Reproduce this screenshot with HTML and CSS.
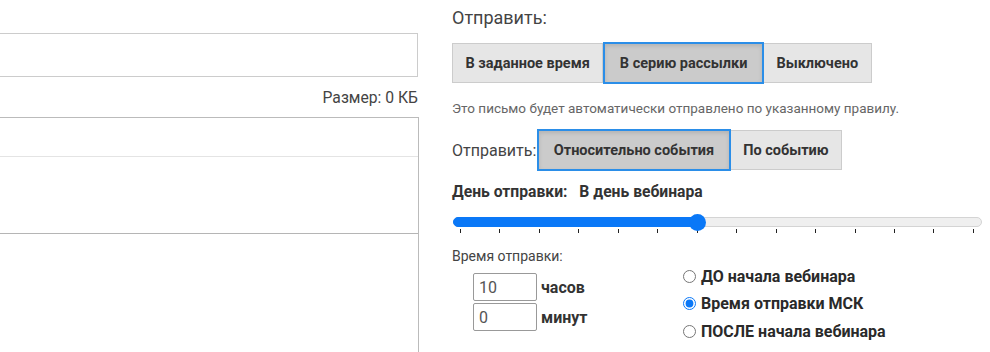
FILE: index.html
```html
<!DOCTYPE html>
<html lang="ru">
<head>
<meta charset="UTF-8" />
<meta name="viewport" content="width=device-width, initial-scale=1" />
<title>Настройки отправки письма</title>
<link rel="stylesheet" href="styles.css">
</head>
<body>

<div class="page">
  <div class="left">
    <div class="subject"></div>
    <div class="size">Размер: 0 КБ</div>
    <div class="editor">
      <div class="editor-toolbar"></div>
      <div class="editor-tabs"></div>
      <div class="editor-body"></div>
    </div>
  </div>

  <div class="right">
    <div class="heading">Отправить:</div>
    <div class="btn-group">
      <button class="btn">В заданное время</button>
      <button class="btn active">В серию рассылки</button>
      <button class="btn">Выключено</button>
    </div>

    <p class="hint">Это письмо будет автоматически отправлено по указанному правилу.</p>

    <div class="send-row">
      <span class="send-label">Отправить:</span>
      <div class="btn-group">
        <button class="btn active">Относительно события</button>
        <button class="btn">По событию</button>
      </div>
    </div>

    <div class="day">День отправки: <span class="day-value">В день вебинара</span></div>

    <div class="slider">
      <div class="track">
        <div class="fill" style="width: 46.2%"></div>
        <div class="thumb" style="left: 46.2%"></div>
      </div>
      <div class="ticks">
        <i></i><i></i><i></i><i></i><i></i><i></i><i></i>
        <i></i><i></i><i></i><i></i><i></i><i></i><i></i>
      </div>
    </div>

    <div class="time-label">Время отправки:</div>
    <div class="time-row">
      <div class="fields">
        <label class="field"><input type="text" value="10"> часов</label>
        <label class="field"><input type="text" value="0"> минут</label>
      </div>
      <div class="radios">
        <label class="radio"><input type="radio" name="when"> ДО начала вебинара</label>
        <label class="radio"><input type="radio" name="when" checked> Время отправки МСК</label>
        <label class="radio"><input type="radio" name="when"> ПОСЛЕ начала вебинара</label>
      </div>
    </div>
  </div>
</div>

</body>
</html>
```

FILE: styles.css
```css
body {
  margin: 0;
  font-family: Roboto, 'Liberation Sans', Arial, sans-serif;
  color: #333;
  background: #fff;
  overflow: hidden;
}

.page {
  display: flex;
  gap: 33px;
}

/* Left column: subject + editor, cut off by the window */
.left {
  width: 421px;
  margin-left: -2px;
  flex-shrink: 0;
}

.subject {
  margin-top: 33px;
  width: 418px;
  height: 42px;
  border: 1px solid #ccc;
}

.size {
  width: 420px;
  text-align: right;
  font-size: 15.7px;
  color: #444;
  margin-top: 11px;
  line-height: 20px;
}

.editor {
  margin-top: 9px;
  border: 1px solid #bbb;
  height: 260px;
}

.editor-toolbar {
  height: 38px;
  border-bottom: 1px solid #e4e4e4;
}

.editor-tabs {
  height: 76px;
  border-bottom: 1px solid #b5b5b5;
}

/* Right column: send settings */
.right {
  flex: 1;
}

.heading {
  font-size: 18px;
  color: #444;
  margin-top: 8px;
  line-height: 20px;
}

.btn-group {
  display: flex;
  align-items: center;
}

.right > .btn-group {
  margin-top: 14px;
}

.btn {
  font-family: inherit;
  font-size: 14.5px;
  font-weight: 700;
  color: #333;
  background: #e6e6e6;
  border: 1px solid #ccc;
  height: 40px;
  padding: 0 12.5px;
  margin: 0;
  cursor: pointer;
}

.btn + .btn {
  border-left: none;
}

.btn.active {
  background: #cbcbcb;
  border: 2px solid #2b8ee8;
  height: 42px;
  padding: 0 14.5px;
  box-shadow: inset 0 2px 4px rgba(0, 0, 0, 0.12);
}

.btn.active + .btn {
  border-left: none;
}

.hint {
  font-size: 13.5px;
  color: #666;
  margin: 16px 0 0;
  line-height: 16px;
}

.send-row {
  display: flex;
  align-items: center;
  margin-top: 13px;
}

.send-label {
  font-size: 16px;
  color: #444;
  margin-right: 1px;
}

.day {
  font-size: 15.7px;
  font-weight: 700;
  color: #333;
  margin-top: 11px;
  line-height: 20px;
}

.day-value {
  margin-left: 8px;
}

.slider {
  margin-top: 15px;
  width: 529px;
  padding-left: 1px;
}

.track {
  position: relative;
  height: 8px;
  background: #efefef;
  border: 1px solid #d4d4d4;
  border-radius: 5px;
}

.fill {
  height: 100%;
  background: #0a78f7;
  border-radius: 5px 0 0 5px;
  margin: -1px 0 0 -1px;
  border: 1px solid #0a78f7;
}

.thumb {
  position: absolute;
  top: 50%;
  width: 17px;
  height: 17px;
  margin: -8.5px 0 0 -8.5px;
  border-radius: 50%;
  background: #0a78f7;
}

.ticks {
  display: flex;
  justify-content: space-between;
  width: 514px;
  margin: 2px 0 0 7px;
}

.ticks i {
  width: 1px;
  height: 4px;
  background: #222;
}

.time-label {
  font-size: 14px;
  color: #444;
  margin-top: 14px;
  line-height: 18px;
}

.time-row {
  display: flex;
  margin-top: 8px;
}

.fields {
  margin-left: 21px;
  width: 210px;
}

.field {
  display: flex;
  align-items: center;
  font-size: 16px;
  font-weight: 700;
  margin-bottom: 2px;
}

.field input {
  width: 64px;
  height: 28px;
  box-sizing: border-box;
  border: 1px solid #999;
  border-radius: 2px;
  font-family: inherit;
  font-size: 16px;
  font-weight: 400;
  color: #555;
  padding: 0 5px;
  margin: 0 4px 0 0;
}

.radios {
  margin-top: -10.75px;
}

.radio {
  display: flex;
  align-items: center;
  font-size: 16px;
  font-weight: 700;
  color: #2a2a2a;
  height: 27.5px;
}

.radio input {
  width: 13px;
  height: 13px;
  margin: 0 5px 0 0;
  accent-color: #0a78f7;
}
```
